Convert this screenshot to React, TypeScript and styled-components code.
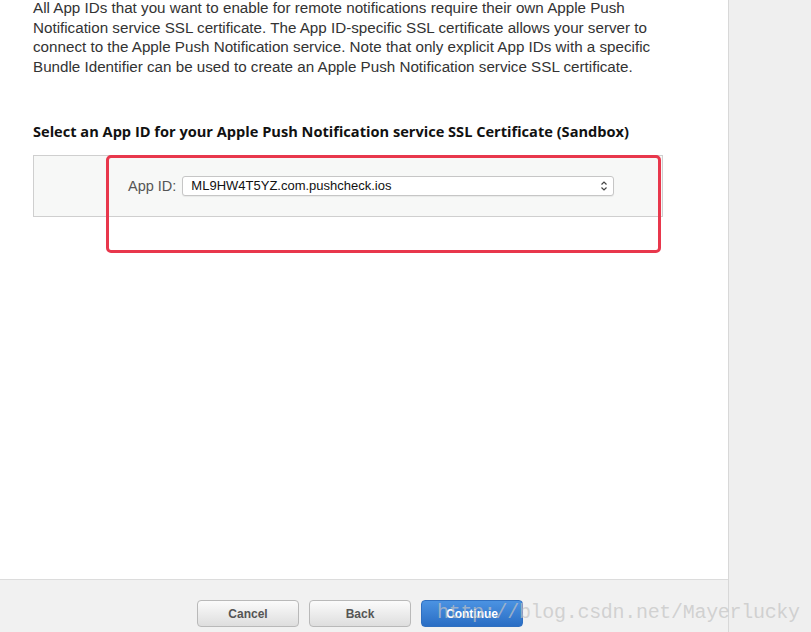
import styled, { createGlobalStyle } from "styled-components";

const GlobalStyle = createGlobalStyle`
  html, body {
    margin: 0;
    padding: 0;
    background: #efefef;
  }
  body {
    font-family: "Liberation Sans", Arial, sans-serif;
  }
`;

const Page = styled.div`
  position: relative;
  width: 811px;
  height: 632px;
  display: flex;
  overflow: hidden;
`;

const Main = styled.div`
  width: 728px;
  display: flex;
  flex-direction: column;
  background: #ffffff;
  border-right: 1px solid #d8d8d8;
  box-shadow: 1px 0 1px rgba(0, 0, 0, 0.05);
`;

const Sidebar = styled.div`
  flex: 1;
  background: #efefef;
`;

const Content = styled.div`
  flex: 1;
  padding: 0 65px 0 33px;
`;

const Intro = styled.p`
  margin: -2px 0 0;
  font-family: "Liberation Sans Narrow", "Liberation Sans", sans-serif;
  font-size: 15.2px;
  line-height: 19.7px;
  color: #333;
`;

const Heading = styled.h3`
  margin: 44px 0 0;
  font-family: "Open Sans", "Liberation Sans", sans-serif;
  font-size: 14.6px;
  font-weight: 700;
  color: #111;
  white-space: nowrap;
`;

const SelectArea = styled.div`
  position: relative;
  margin-top: 14px;
`;

const Box = styled.div`
  height: 62px;
  width: 630px;
  box-sizing: border-box;
  background: #f7f8f7;
  border: 1px solid #cfcfcf;
  display: flex;
  align-items: flex-start;
  padding: 20px 0 0 94px;
  gap: 6px;
`;

const Label = styled.span`
  font-family: "Liberation Sans", Arial, sans-serif;
  font-size: 14.5px;
  line-height: 20px;
  color: #555;
`;

const Select = styled.div`
  width: 432px;
  height: 20px;
  box-sizing: border-box;
  background: #fff;
  border: 1px solid #c6c6c6;
  border-radius: 3px;
  display: flex;
  align-items: center;
  justify-content: space-between;
  padding: 0 5px 0 8px;
  font-family: "Liberation Sans", Arial, sans-serif;
  font-size: 13px;
  color: #111;
  box-shadow: 0 1px 1px rgba(0, 0, 0, 0.06);
`;

const Highlight = styled.div`
  position: absolute;
  left: 73px;
  top: 0;
  width: 555px;
  height: 98px;
  box-sizing: border-box;
  border: 3px solid #e8374c;
  border-radius: 5px;
  pointer-events: none;
`;

const Footer = styled.div`
  height: 53px;
  box-sizing: border-box;
  background: #f1f1f1;
  border-top: 1px solid #dcdcdc;
  display: flex;
  align-items: flex-start;
  padding: 20px 0 0 197px;
  gap: 10px;
`;

const Button = styled.button<{ $primary?: boolean }>`
  width: 102px;
  height: 27px;
  border-radius: 4px;
  font-family: "Liberation Sans", Arial, sans-serif;
  font-size: 12px;
  font-weight: 700;
  cursor: pointer;
  color: ${(p) => (p.$primary ? "#fff" : "#555")};
  border: 1px solid ${(p) => (p.$primary ? "#2f6fc0" : "#b9b9b9")};
  background: ${(p) =>
    p.$primary
      ? "linear-gradient(#4b93e2, #2a6dc4)"
      : "linear-gradient(#fbfbfb, #dedede)"};
`;

const Watermark = styled.div`
  position: absolute;
  left: 437px;
  top: 601px;
  font-family: "Liberation Mono", "DejaVu Sans Mono", monospace;
  font-size: 20px;
  color: rgba(195, 195, 195, 0.7);
  letter-spacing: -0.3px;
  pointer-events: none;
`;

const Chevrons = () => (
  <svg width="8" height="12" viewBox="0 0 8 12">
    <path d="M1.5 4.5 L4 2 L6.5 4.5 M1.5 7.5 L4 10 L6.5 7.5" fill="none" stroke="#444" strokeWidth="1.2" />
  </svg>
);

export default function App() {
  return (
    <Page>
      <GlobalStyle />
      <Main>
        <Content>
          <Intro>
            All App IDs that you want to enable for remote notifications require their own Apple Push
            Notification service SSL certificate. The App ID-specific SSL certificate allows your server to
            connect to the Apple Push Notification service. Note that only explicit App IDs with a specific
            Bundle Identifier can be used to create an Apple Push Notification service SSL certificate.
          </Intro>
          <Heading>Select an App ID for your Apple Push Notification service SSL Certificate (Sandbox)</Heading>
          <SelectArea>
            <Box>
              <Label>App ID:</Label>
              <Select>
                <span>ML9HW4T5YZ.com.pushcheck.ios</span>
                <Chevrons />
              </Select>
            </Box>
            <Highlight />
          </SelectArea>
        </Content>
        <Footer>
          <Button>Cancel</Button>
          <Button>Back</Button>
          <Button $primary>Continue</Button>
        </Footer>
      </Main>
      <Sidebar />
      <Watermark>http://blog.csdn.net/Mayerlucky</Watermark>
    </Page>
  );
}
